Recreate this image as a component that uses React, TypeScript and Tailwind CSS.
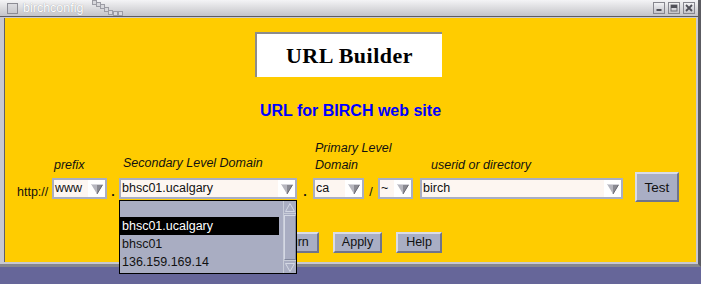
import React from "react";

const Arrow = () => (
  <svg width="12" height="10" viewBox="0 0 12 10">
    <polygon points="0,0 12,0 6,10" fill="#b6b6be" />
    <polygon points="6,0 12,0 6,10" fill="#8a8a92" />
    <line x1="12" y1="0" x2="6" y2="10" stroke="#6a6a72" strokeWidth="1" />
    <line x1="0" y1="0.5" x2="12" y2="0.5" stroke="#d6d6dc" strokeWidth="1" />
  </svg>
);

function Combo({ value, className }: { value: string; className: string }) {
  return (
    <div className={`${className} h-[21px] flex border-2 border-[#a9aec3] bg-white`}>
      <div className="flex-1 bg-[#fdf6f1] pl-[1px] leading-[17px] text-[12.5px] text-[#111] overflow-hidden whitespace-nowrap">
        {value}
      </div>
      <div className="w-[17px] flex items-center justify-center bg-white">
        <Arrow />
      </div>
    </div>
  );
}

function Btn({ label, className }: { label: string; className: string }) {
  return (
    <div
      className={`${className} h-[21px] flex items-center justify-center bg-[#a9aec4] border-2 border-t-[#d9dce8] border-l-[#d9dce8] border-r-[#70748a] border-b-[#70748a] text-[12.5px] text-[#111]`}
    >
      {label}
    </div>
  );
}

function WinBtn({ kind }: { kind: "min" | "max" | "close" }) {
  return (
    <div className="w-[12px] h-[12px] border border-[#86868e] bg-gradient-to-b from-[#f2f2f4] to-[#c4c4ca] flex items-center justify-center">
      <svg width="10" height="10" viewBox="0 0 10 10">
        {kind === "min" && <rect x="2.5" y="6" width="5" height="2" fill="#505058" />}
        {kind === "max" && (
          <>
            <rect x="2" y="2" width="6" height="6" fill="none" stroke="#707078" strokeWidth="1" />
            <rect x="2" y="2" width="6" height="3" fill="#505058" />
          </>
        )}
        {kind === "close" && (
          <path d="M2 2 L8 8 M8 2 L2 8" stroke="#505058" strokeWidth="1.8" />
        )}
      </svg>
    </div>
  );
}

export default function App() {
  return (
    <div
      className="w-[701px] h-[284px] bg-[#666699] relative overflow-hidden"
      style={{ fontFamily: '"Liberation Sans", Arial, sans-serif' }}
    >
      <div className="h-[267px] flex flex-col bg-[#dedee6] border-r-[3px] border-r-[#5c5c62] border-b-[3px] border-b-[#86868e]">
        {/* title bar */}
        <div className="h-[16px] shrink-0 flex items-center bg-gradient-to-b from-[#f4f4f6] to-[#c4c4c8] relative">
          <div className="ml-[7px] w-[11px] h-[11px] border border-[#8c8c94] bg-gradient-to-b from-[#dcdce0] to-[#c8c8cc]" />
          <div className="ml-[5px] text-[12.5px] leading-[16px] text-white [text-shadow:0_0_1px_#8a8a92]">
            birchconfig
          </div>
          <svg width="36" height="16" viewBox="0 0 36 16" className="ml-[9px]">
            {[
              [0, 0],
              [4, 2],
              [8, 4],
              [12, 7],
              [16, 10],
              [21, 11],
              [26, 11],
            ].map(([x, y], i) => (
              <rect key={i} x={x + 0.5} y={y + 0.5} width="4" height="4" fill="#d8d8dc" stroke="#9c9ca4" strokeWidth="1" />
            ))}
          </svg>
          <div className="ml-auto mr-[3px] flex gap-[3px]">
            <WinBtn kind="min" />
            <WinBtn kind="max" />
            <WinBtn kind="close" />
          </div>
        </div>
        <div className="h-[1px] shrink-0 bg-[#5c5c64]" />
        {/* frame + content */}
        <div className="flex-1 flex pl-[4px] pr-[2px] pt-[1px] pb-[2px] bg-[#c8c8d0]">
          <div className="flex-1 bg-[#ffcc00] border-l border-l-[#606068] flex flex-col">
            <div className="mt-[14px] ml-[250px] w-[187px] h-[45px] bg-white border-t-2 border-l-2 border-t-[#8c8c8c] border-l-[#8c8c8c] flex items-center justify-center">
              <span
                className="text-[22px] leading-[26px] font-bold tracking-[0.5px] text-black"
                style={{ fontFamily: '"Liberation Serif", "DejaVu Serif", serif' }}
              >
                URL Builder
              </span>
            </div>
            <div className="mt-[25px] text-center text-[16px] leading-[18px] font-bold text-[#0000ff]">
              URL for BIRCH web site
            </div>
            {/* form row */}
            <div className="mt-[20px] flex items-end pl-[11px] text-[12.5px] leading-[17px] text-[#111]">
              <div className="w-[36px] mb-[-2px] pl-[1px]">http://</div>
              <div className="w-[55px] flex flex-col">
                <div className="italic pl-[2px] mb-[4px] whitespace-nowrap">prefix</div>
                <Combo value="www" className="w-[55px]" />
              </div>
              <div className="w-[12px] mb-[-2px] text-center font-bold">.</div>
              <div className="w-[178px] flex flex-col">
                <div className="italic pl-[4px] mb-[6px] whitespace-nowrap">Secondary Level Domain</div>
                <Combo value="bhsc01.ucalgary" className="w-[178px]" />
              </div>
              <div className="w-[16px] mb-[-2px] text-center font-bold">.</div>
              <div className="w-[51px] flex flex-col">
                <div className="italic pl-[2px] mb-[4px] whitespace-nowrap">
                  Primary Level
                  <br />
                  Domain
                </div>
                <Combo value="ca" className="w-[51px]" />
              </div>
              <div className="w-[14px] mb-[-2px] text-center">/</div>
              <Combo value="~" className="w-[35px]" />
              <div className="w-[7px]" />
              <div className="w-[203px] flex flex-col">
                <div className="italic pl-[11px] mb-[4px] whitespace-nowrap">userid or directory</div>
                <Combo value="birch" className="w-[203px]" />
              </div>
              <div className="ml-[12px] mb-[-3px] w-[44px] h-[30px] flex items-center justify-center bg-[#a9aec4] border-2 border-t-[#d9dce8] border-l-[#d9dce8] border-r-[#70748a] border-b-[#70748a] text-[13.5px] text-[#111]">
                Test
              </div>
            </div>
            {/* buttons row */}
            <div className="mt-[33px] flex justify-center gap-[14px] pl-[2px]">
              <Btn label="Return" className="w-[58px]" />
              <Btn label="Apply" className="w-[49px]" />
              <Btn label="Help" className="w-[46px]" />
            </div>
          </div>
        </div>
      </div>

      {/* open dropdown list */}
      <div className="absolute left-[119px] top-[200px] w-[178px] h-[74px] border border-black bg-[#a9adc2] flex text-[12.5px] leading-[18px]">
        <div className="w-[159px] flex flex-col">
          <div className="h-[16px]" />
          <div className="h-[18px] bg-black text-white pl-[2px] pt-[1px] leading-[17px]">bhsc01.ucalgary</div>
          <div className="h-[18px] text-[#111] pl-[2px] pt-[1px] leading-[17px]">bhsc01</div>
          <div className="h-[18px] text-[#111] pl-[2px] pt-[1px] leading-[17px]">136.159.169.14</div>
        </div>
        <div className="ml-[4px] w-[13px] flex flex-col border-l border-l-[#c8ccd8]">
          <div className="h-[13px] flex items-center justify-center border-b border-b-[#c8ccd8]">
            <svg width="10" height="9" viewBox="0 0 10 9">
              <polygon points="5,0.5 9.5,8.5 0.5,8.5" fill="none" stroke="#d4d8e4" strokeWidth="1" />
            </svg>
          </div>
          <div className="mt-[1px] flex-1 border border-t-[#d4d8e4] border-l-[#d4d8e4] border-r-[#80869c] border-b-[#80869c]" />
          <div className="h-[13px] flex items-center justify-center border-t border-t-[#c8ccd8]">
            <svg width="10" height="9" viewBox="0 0 10 9">
              <polygon points="0.5,0.5 9.5,0.5 5,8.5" fill="none" stroke="#d4d8e4" strokeWidth="1" />
            </svg>
          </div>
        </div>
      </div>
    </div>
  );
}
